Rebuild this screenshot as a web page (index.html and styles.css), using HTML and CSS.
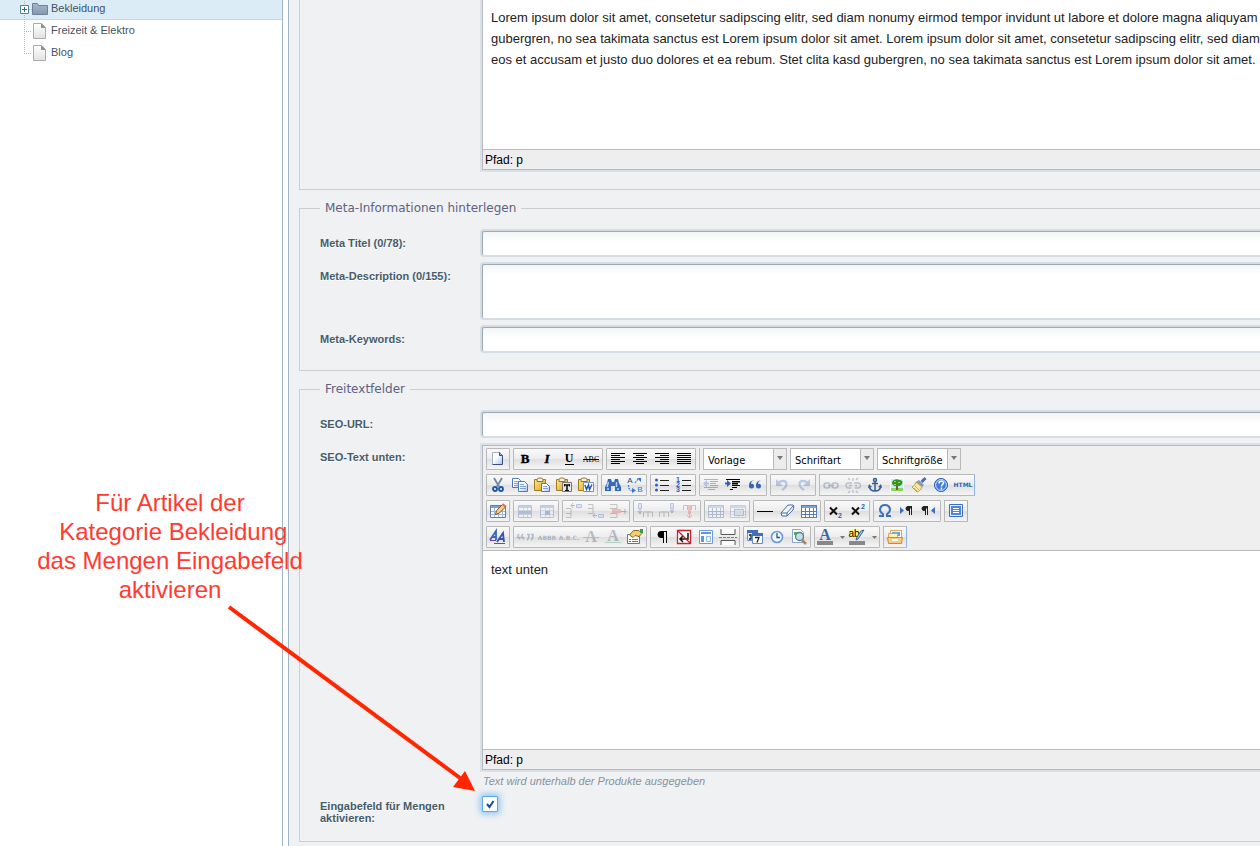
FILE: index.html
```html
<!DOCTYPE html>
<html lang="de">
<head>
<meta charset="utf-8">
<title>Kategorien</title>
<link rel="stylesheet" href="styles.css">
</head>
<body>
<svg width="0" height="0" class="defs" aria-hidden="true">
  <defs>
    <linearGradient id="paper" x1="0" y1="0" x2="1" y2="1"><stop offset=".4" stop-color="#fff"/><stop offset="1" stop-color="#a9c0e6"/></linearGradient>
    <linearGradient id="gold" x1="0" y1="0" x2="1" y2="1"><stop offset="0" stop-color="#ffe98a"/><stop offset="1" stop-color="#d9a02c"/></linearGradient>
    <linearGradient id="folder" x1="0" y1="0" x2="0" y2="1"><stop offset="0" stop-color="#a9b8cb"/><stop offset="1" stop-color="#8397b0"/></linearGradient>
    <linearGradient id="sheet" x1="0" y1="0" x2="0" y2="1"><stop offset="0" stop-color="#fff"/><stop offset="1" stop-color="#e2e2e2"/></linearGradient>
    <symbol id="grid" viewBox="0 0 20 20"><path d="M2.500 4.500h15v12h-15z" fill="#fff" stroke="#5f7fb4"/><path d="M3 5h14v2H3z" fill="#7ba0dc"/><path d="M6.500 7v9M10.500 7v9M14.500 7v9M3 10.500h14M3 13.500h14" stroke="#9db6dc"/></symbol>
    <symbol id="rows" viewBox="0 0 20 20"><path d="M3.500 4.500h13v12h-13z" fill="#fff" stroke="#3b63a8"/><path d="M4 5h12v2H4z" fill="#5b86c8"/><path d="M8.500 7v9M12.500 7v9M4 9.500h12M4 13.500h12" stroke="#7f9dcd"/></symbol>
    <symbol id="clip" viewBox="0 0 20 20"><path d="M2.500 4.500h11v11h-11z" fill="url(#gold)" stroke="#a57c1c"/><path d="M5 4.500c0-2 6-2 6 0v2H5z" fill="#f7f3d0" stroke="#8a733a"/></symbol>
  </defs>
</svg>
<div class="app">
  <nav class="tree" aria-label="Kategorien">
    <ul>
      <li class="selected"><svg width="51" height="22"><path d="M24.500 0v22M29 12.500h4" class="dots"/><path d="M20.500 8.500h8v8h-8z" fill="#fff" stroke="#4f8791"/><path d="M22 12.500h5M24.500 10v5" stroke="#2f6f7a"/><path d="M32.500 17.500v-11h5l1 2h9v9z" fill="url(#folder)" stroke="#6c819c"/></svg><a href="#">Bekleidung</a></li>
      <li><svg width="51" height="22"><path d="M24.500 0v22M26 12.500h6" class="dots"/><path d="M33.500 4.500h8l4 4v11h-12z" fill="url(#sheet)" stroke="#acacac"/><path d="M41 4v5h5z" fill="#929292"/></svg><a href="#">Freizeit &amp; Elektro</a></li>
      <li><svg width="51" height="22"><path d="M24.500 0v13M26 12.500h6" class="dots"/><path d="M33.500 4.500h8l4 4v11h-12z" fill="url(#sheet)" stroke="#acacac"/><path d="M41 4v5h5z" fill="#929292"/></svg><a href="#">Blog</a></li>
    </ul>
  </nav>
  <main class="panel">
    <form>
      <fieldset class="continued">
        <div class="row">
          <span class="label"></span>
          <div class="editor">
            <div class="content short"><p>Lorem ipsum dolor sit amet, consetetur sadipscing elitr, sed diam nonumy eirmod tempor invidunt ut labore et dolore magna aliquyam<br>gubergren, no sea takimata sanctus est Lorem ipsum dolor sit amet. Lorem ipsum dolor sit amet, consetetur sadipscing elitr, sed diam<br>eos et accusam et justo duo dolores et ea rebum. Stet clita kasd gubergren, no sea takimata sanctus est Lorem ipsum dolor sit amet.</p></div>
            <div class="status">Pfad: p</div>
          </div>
        </div>
      </fieldset>
      <fieldset>
        <legend>Meta-Informationen hinterlegen</legend>
        <div class="row"><label class="label" for="title">Meta Titel (0/78):</label><input class="field" id="title" type="text"></div>
        <div class="row"><label class="label" for="desc">Meta-Description (0/155):</label><textarea class="field area" id="desc"></textarea></div>
        <div class="row"><label class="label" for="keys">Meta-Keywords:</label><input class="field" id="keys" type="text"></div>
      </fieldset>
      <fieldset class="last">
        <legend>Freitextfelder</legend>
        <div class="row"><label class="label" for="url">SEO-URL:</label><input class="field" id="url" type="text"></div>
        <div class="row">
          <span class="label">SEO-Text unten:</span>
          <div class="stack">
          <div class="editor">
            <div class="toolbar">
              <div class="tools">
                <div class="group"><button type="button" aria-label="Neu"><svg viewBox="0 0 20 20"><path d="M4.500 3.500h7l3 3v9h-10z" fill="url(#paper)"/><path d="M4.500 15.500v-12h7" fill="none" stroke="#9fb2d2"/><path d="M11.500 3.500l3 3v9h-10" fill="none" stroke="#35507f"/><path d="M11.500 3.500v3h3" fill="#8fa8cf" stroke="#35507f"/></svg></button></div>
                <div class="group">
                  <button type="button" aria-label="Fett"><svg viewBox="0 0 20 20"><text x="10" y="14" class="serif heavy">B</text></svg></button>
                  <button type="button" aria-label="Kursiv"><svg viewBox="0 0 20 20"><text x="10" y="14" class="serif it heavy">I</text></svg></button>
                  <button type="button" aria-label="Unterstrichen"><svg viewBox="0 0 20 20"><text x="10" y="13" class="serif">U</text><path d="M6 15.500h9" stroke="#000"/></svg></button>
                  <button type="button" aria-label="Durchgestrichen"><svg viewBox="0 0 20 20"><text x="10" y="13" class="serif abc">ABC</text><path d="M2 10.500h16" stroke="#000"/></svg></button>
                </div>
                <div class="group lines">
                  <button type="button" aria-label="Links"><svg viewBox="0 0 20 20"><path d="M3 4.500h14M3 6.500h9M3 8.500h14M3 10.500h9M3 12.500h14M3 14.500h9"/></svg></button>
                  <button type="button" aria-label="Zentriert"><svg viewBox="0 0 20 20"><path d="M3 4.500h14M6 6.500h8M3 8.500h14M6 10.500h8M3 12.500h14M6 14.500h8"/></svg></button>
                  <button type="button" aria-label="Rechts"><svg viewBox="0 0 20 20"><path d="M3 4.500h14M8 6.500h9M3 8.500h14M8 10.500h9M3 12.500h14M8 14.500h9"/></svg></button>
                  <button type="button" aria-label="Blocksatz"><svg viewBox="0 0 20 20"><path d="M3 4.500h14M3 6.500h14M3 8.500h14M3 10.500h14M3 12.500h14M3 14.500h14"/></svg></button>
                </div>
                <span class="divider"></span>
                <div class="pick"><select aria-label="Vorlage"><option>Vorlage</option></select></div>
                <div class="pick"><select aria-label="Schriftart"><option>Schriftart</option></select></div>
                <div class="pick"><select aria-label="Schriftgröße"><option>Schriftgröße</option></select></div>
              </div>
              <div class="tools">
                <div class="group">
                  <button type="button" aria-label="Ausschneiden"><svg viewBox="0 0 20 20"><path d="M6 3l5 8.500M14 3L9 11.500" stroke="#6f87a8" stroke-width="1.800"/><g fill="none" stroke="#1f57a8" stroke-width="1.800"><circle cx="7" cy="14" r="2"/><circle cx="13" cy="14" r="2"/></g></svg></button>
                  <button type="button" aria-label="Kopieren"><svg viewBox="0 0 20 20"><g fill="url(#paper)" stroke="#4d78bd"><path d="M2.500 3.500h6l2 2v7h-8z"/><path d="M8.500 6.500h6l3 3v7h-9z"/></g><path d="M4 6.500h4M4 8.500h4M4 10.500h4M10 9.500h4M10 11.500h6M10 13.500h6" stroke="#7ea3dc"/></svg></button>
                  <button type="button" aria-label="Einfügen"><svg viewBox="0 0 20 20"><use href="#clip"/><path d="M9.500 8.500h5l3 3v5h-8z" fill="url(#paper)" stroke="#5c77a5"/><path d="M11 11.500h4M11 13.500h5" stroke="#7ea3dc"/></svg></button>
                  <button type="button" aria-label="Als Text einfügen"><svg viewBox="0 0 20 20"><use href="#clip"/><path d="M8.500 7.500h9v9h-9z" fill="#e8e8e0" stroke="#777"/><path d="M10 10h6M13 10v5" stroke="#111" stroke-width="1.600"/><path d="M11 15.500h4M10.500 9v2.500M15.500 9v2.500" stroke="#111"/></svg></button>
                  <button type="button" aria-label="Aus Word einfügen"><svg viewBox="0 0 20 20"><use href="#clip"/><path d="M7.500 7.500h10v9h-10z" fill="#fff" stroke="#6e93cf"/><path d="M9 10l1.500 4.500 2-4.500 1 4.500 2.500-5" fill="none" stroke="#2258b6" stroke-width="1.500"/></svg></button>
                </div>
                <div class="group">
                  <button type="button" aria-label="Suchen"><svg viewBox="0 0 20 20"><path d="M5 4h3l1 3h2l1-3h3l1 4 2 4v4h-6v-5H8v5H2v-4l2-4z" fill="#3569b7"/><path d="M5.500 7L4 12M13.500 7v5M4 14h2M14 14h2" stroke="#b6d2fa" stroke-width="1.500"/></svg></button>
                  <button type="button" aria-label="Ersetzen"><svg viewBox="0 0 20 20"><text x="5" y="8" class="tiny dark">A</text><text x="15" y="17" class="tiny">B</text><path d="M3.500 10v3l3 3M10 8l3-4" fill="none" stroke="#4d7fd0" stroke-width="1.200" stroke-dasharray="2 1"/><path d="M12 3h4v4zM7 13l4 2.500L7 18z" fill="#3671df"/></svg></button>
                </div>
                <div class="group">
                  <button type="button" aria-label="Liste"><svg viewBox="0 0 20 20"><path d="M8 5.500h9M8 10.500h9M8 15.500h9" stroke="#222"/><g fill="#2861bd"><circle cx="4.500" cy="5" r="1.500"/><circle cx="4.500" cy="10" r="1.500"/><circle cx="4.500" cy="15" r="1.500"/></g></svg></button>
                  <button type="button" aria-label="Nummerierung"><svg viewBox="0 0 20 20"><path d="M8 5.500h9M8 10.500h9M8 15.500h9" stroke="#222"/><text x="4" y="7" class="num">1</text><text x="4" y="12" class="num">2</text><text x="4" y="17" class="num">3</text></svg></button>
                </div>
                <div class="group">
                  <button type="button" class="off" aria-label="Ausrücken"><svg viewBox="0 0 20 20"><path d="M3 4.500h14M9 6.500h8M9 8.500h6M9 10.500h8M3 12.500h14M7 14.500h7" stroke="#222"/><path d="M2 8.500L6 5v2.500h2v2H6V12z" fill="#2861bd"/></svg></button>
                  <button type="button" aria-label="Einrücken"><svg viewBox="0 0 20 20"><path d="M3 4.500h14M9 6.500h8M9 8.500h5M9 10.500h8M9 12.500h5M7 14.500h3" stroke="#000"/><path d="M9 6h8v1.500H9zM9 8h6v1.500H9z"/><path d="M2 7.500h2V5l4 3.500L4 12V9.500H2z" fill="#2861bd"/></svg></button>
                  <button type="button" aria-label="Zitat"><svg viewBox="0 0 20 20"><path d="M9 5c-2 1-3 2-3 4 2-1 3 .5 3 2a2.500 2.500 0 0 1-5 0c0-3 1-5 5-6zM16 5c-2 1-3 2-3 4 2-1 3 .5 3 2a2.500 2.500 0 0 1-5 0c0-3 1-5 5-6z" fill="#3766aa"/></svg></button>
                </div>
                <div class="group">
                  <button type="button" class="off" aria-label="Rückgängig"><svg viewBox="0 0 20 20"><path d="M6 8c5-4 10-2 8 3-1 2-2 3-4 4" fill="none" stroke="#3766c8" stroke-width="2.200"/><path d="M4 4v7h7z" fill="#3766c8"/></svg></button>
                  <button type="button" class="off" aria-label="Wiederholen"><svg viewBox="0 0 20 20"><path d="M14 8c-5-4-10-2-8 3 1 2 2 3 4 4" fill="none" stroke="#3766c8" stroke-width="2.200"/><path d="M16 4v7H9z" fill="#3766c8"/></svg></button>
                </div>
                <div class="group end">
                  <button type="button" class="off" aria-label="Link"><svg viewBox="0 0 20 20"><g fill="none" stroke="#3c5482" stroke-width="1.500"><rect x="3" y="8" width="6" height="5" rx="2.500"/><rect x="11" y="8" width="6" height="5" rx="2.500"/><path d="M7 10.500h6"/></g></svg></button>
                  <button type="button" class="off" aria-label="Link entfernen"><svg viewBox="0 0 20 20"><g fill="none" stroke="#3c5482" stroke-width="1.300"><path d="M9 8H5.500a2.500 2.500 0 0 0 0 5H8M11 8h4a2.500 2.500 0 0 1 0 5h-3M6 10.500h3M12 10.500h2M5 3l2 2M10 3v3M15 3l-2 2M5 18l2-2M10 18v-3M15 18l-2-2"/></g></svg></button>
                  <button type="button" aria-label="Anker"><svg viewBox="0 0 20 20"><g fill="none" stroke="#365c94" stroke-width="1.500"><circle cx="10" cy="5" r="1.500"/><path d="M10 7v9M7 8.500h6M4.500 11c0 4 3 5 5.500 5s5.500-1 5.500-5"/></g><path d="M3 13l1-4 3 3zM17 13l-1-4-3 3z" fill="#365c94"/></svg></button>
                  <button type="button" aria-label="Bild"><svg viewBox="0 0 20 20"><path d="M3.500 3.500h13v13h-13z" fill="#c6eaff" stroke="#fff"/><path d="M4 13h12v3H4z" fill="#8bd75d"/><path d="M9 10h2v5H9z" fill="#8b5523"/><path d="M5 8c0-2 1-2 2-3 2-1 4-1 5 0 3 0 4 2 3 4-1 2-3 2-4 2-3 1-6-1-6-3z" fill="#2f9720"/><path d="M7 6.500h2M11 7.500h2M7 9.500h2" stroke="#93dc59"/></svg></button>
                  <button type="button" aria-label="Aufräumen"><svg viewBox="0 0 20 20"><path d="M16.500 3l-4 4" stroke="#4b6fae" stroke-width="3"/><path d="M10 5l5 5-2 2-6-5z" fill="#8a98b0"/><path d="M7 7l6 5c-1 3-3 4-5 5l-5-5c2-1 3-2 4-5z" fill="#f8eaa4" stroke="#b9a052"/><path d="M6 11l4 4M5 13l3 3" stroke="#cdb25e"/></svg></button>
                  <button type="button" aria-label="Hilfe"><svg viewBox="0 0 20 20"><circle cx="10" cy="10" r="6.500" fill="#3e7ddb" stroke="#2a5db0"/><circle cx="10" cy="10" r="5.400" fill="none" stroke="#cfe1fb"/><path d="M8 8.500c0-3 4.500-3 4.500-.5 0 1.500-2 1.500-2 3.500M10.500 12.500v2" fill="none" stroke="#fff" stroke-width="1.600"/></svg></button>
                  <button type="button" aria-label="HTML"><svg viewBox="0 0 20 20"><text x="10" y="12" class="html">HTML</text></svg></button>
                </div>
              </div>
              <div class="tools">
                <div class="group"><button type="button" aria-label="Tabelle"><svg viewBox="0 0 20 20"><use href="#grid"/><path d="M7.500 13.500l1-4 6-6 3 2.500-6 6z" fill="#f4cd80" stroke="#7b5930"/><path d="M14.500 3l3.500 3" stroke="#d4736a" stroke-width="2"/></svg></button></div>
                <div class="group off">
                  <button type="button" aria-label="Zeile"><svg viewBox="0 0 20 20"><use href="#rows"/><path d="M4 10h12v3H4z" fill="#3b70c4"/></svg></button>
                  <button type="button" aria-label="Zelle"><svg viewBox="0 0 20 20"><use href="#rows"/><path d="M8 10h5v4H8z" fill="#1e55b8"/></svg></button>
                </div>
                <div class="group off">
                  <button type="button" aria-label="Zeile davor"><svg viewBox="0 0 20 20"><path d="M2 7.500h5v9H2M2 12.500h5" fill="none" stroke="#555"/><path d="M7 4.500h4M9 2L7 4.500 9 7" stroke="#333" fill="none"/><path d="M12.500 3.500h5v3h-5z" fill="#a9c9ff" stroke="#2b60bc"/></svg></button>
                  <button type="button" aria-label="Zeile danach"><svg viewBox="0 0 20 20"><path d="M2 3.500h5v9H2M2 7.500h5" fill="none" stroke="#555"/><path d="M7 14.500h4M9 12l-2 2.500L9 17" stroke="#333" fill="none"/><path d="M12.500 13.500h5v3h-5z" fill="#a9c9ff" stroke="#2b60bc"/></svg></button>
                  <button type="button" aria-label="Zeile löschen"><svg viewBox="0 0 20 20"><path d="M2 3.500h7v13H2M2 7.500h7M2 12.500h7" fill="none" stroke="#555"/><path d="M4 8h9v4H4z" fill="#e0564e"/><path d="M13 10.500h5M16 8l2 2.500-2 2.500" stroke="#333" fill="none"/></svg></button>
                </div>
                <div class="group off">
                  <button type="button" aria-label="Spalte davor"><svg viewBox="0 0 20 20"><path d="M8.500 16v-5h9v5M13 11v5" fill="none" stroke="#555"/><path d="M3.500 2.500h3v5h-3z" fill="#a9c9ff" stroke="#2b60bc"/><path d="M5 8v5M3 10l2 3 2-3" stroke="#333" fill="none"/></svg></button>
                  <button type="button" aria-label="Spalte danach"><svg viewBox="0 0 20 20"><path d="M2.500 16v-5h9v5M7 11v5" fill="none" stroke="#555"/><path d="M13.500 2.500h3v5h-3z" fill="#a9c9ff" stroke="#2b60bc"/><path d="M15 8v4M13 9l2 3 2-3" stroke="#333" fill="none"/></svg></button>
                  <button type="button" aria-label="Spalte löschen"><svg viewBox="0 0 20 20"><path d="M4.500 9V4.500h12V9M8.500 4v5M12.500 4v5" fill="none" stroke="#555"/><path d="M9 4h3v9H9z" fill="#e0564e"/><path d="M10.500 12v5M8 14l2.500 3 2.500-3" stroke="#d33" fill="none"/></svg></button>
                </div>
                <div class="group off">
                  <button type="button" aria-label="Zellen teilen"><svg viewBox="0 0 20 20"><use href="#grid"/><path d="M2.500 4.500h15v12h-15zM6.500 7v9M10.500 7v9M14.500 7v9M3 10.500h14M3 13.500h14" fill="none" stroke="#35599c"/></svg></button>
                  <button type="button" aria-label="Zellen verbinden"><svg viewBox="0 0 20 20"><use href="#grid"/><path d="M6.500 8.500h9v6h-9z" fill="#b9cdea" stroke="#35599c"/></svg></button>
                </div>
                <div class="group">
                  <button type="button" aria-label="Linie"><svg viewBox="0 0 20 20"><path d="M2 10.500h16" stroke="#000"/></svg></button>
                  <button type="button" aria-label="Format löschen"><svg viewBox="0 0 20 20"><path d="M4 12l7-8h5l1 1-1 4-6 6H5z" fill="#f4f8ff" stroke="#486ba8"/><path d="M4 12h6l6-7M10 12v3" fill="none" stroke="#486ba8"/></svg></button>
                  <button type="button" aria-label="Hilfslinien"><svg viewBox="0 0 20 20"><use href="#grid"/><path d="M2.500 4.500h15v12h-15zM6.500 7v9M10.500 7v9M14.500 7v9M3 10.500h14M3 13.500h14" fill="none" stroke="#5a7db8"/></svg></button>
                </div>
                <div class="group">
                  <button type="button" aria-label="Tiefgestellt"><svg viewBox="0 0 20 20"><path d="M4 6.500l7 7M11 6.500l-7 7" stroke="#111" stroke-width="2"/><text x="14" y="17" class="num">2</text></svg></button>
                  <button type="button" aria-label="Hochgestellt"><svg viewBox="0 0 20 20"><path d="M4 6.500l7 7M11 6.500l-7 7" stroke="#111" stroke-width="2"/><text x="15" y="8" class="num">2</text></svg></button>
                </div>
                <div class="group">
                  <button type="button" aria-label="Sonderzeichen"><svg viewBox="0 0 20 20"><path d="M4 15h4v-2c-5-3-3-9 2-9s7 6 2 9v2h4" fill="none" stroke="#3970c2" stroke-width="2"/></svg></button>
                  <button type="button" aria-label="Links nach rechts"><svg viewBox="0 0 20 20"><path d="M3 6l4 3.500L3 13z" fill="#3970c2"/><path d="M15 5.500h-4a2 2 0 0 0 0 4h1M12.500 5v9M14.500 5v9" fill="#222" stroke="#222"/></svg></button>
                  <button type="button" aria-label="Rechts nach links"><svg viewBox="0 0 20 20"><path d="M16 6l-4 3.500 4 3.500z" fill="#3970c2"/><path d="M9 5.500H5a2 2 0 0 0 0 4h1M6.500 5v9M8.500 5v9" fill="#222" stroke="#222"/></svg></button>
                </div>
                <div class="group end"><button type="button" aria-label="Vollbild"><svg viewBox="0 0 20 20"><path d="M3.500 3.500h13v12h-13z" fill="#e3efff" stroke="#3a6fc4"/><path d="M5 5h10v9H5z" fill="#4f87e0"/><path d="M7 7.500h6M7 9.500h6M7 11.500h6" stroke="#fff"/></svg></button></div>
              </div>
              <div class="tools">
                <div class="group"><button type="button" aria-label="Stil"><svg viewBox="0 0 20 20"><path d="M2 13l6-9v9M4 10h4" fill="none" stroke="#3769b5" stroke-width="1.800"/><path d="M9 15l6-9 1 9M11 12h5" fill="none" stroke="#3553ae" stroke-width="1.800"/><path d="M2 13.500h6M6 16.500h11" stroke="#7a3fba"/></svg></button></div>
                <div class="group">
                  <button type="button" class="off" aria-label="Zitat"><svg viewBox="0 0 20 20"><path d="M4 7c-1 1-1.500 2-1.500 3.500h2v2M8 7c-1 1-1.500 2-1.500 3.500h2v2M12 7.500h2c0 2 0 4-2 5.500M16 7.500h2c0 2 0 4-2 5.500" fill="none" stroke="#2b4777" stroke-width="1.600"/></svg></button>
                  <button type="button" class="off" aria-label="Abkürzung"><svg viewBox="0 0 20 20"><text x="10" y="13" class="mini">ABBR</text></svg></button>
                  <button type="button" class="off" aria-label="Akronym"><svg viewBox="0 0 20 20"><text x="10" y="13" class="mini">A.B.C.</text></svg></button>
                  <button type="button" class="off" aria-label="Gelöscht"><svg viewBox="0 0 20 20"><text x="10" y="15" class="big">A</text><path d="M2 10.500h16" stroke="#e03030"/></svg></button>
                  <button type="button" class="off" aria-label="Eingefügt"><svg viewBox="0 0 20 20"><text x="10" y="14" class="big">A</text><path d="M2 15.500h16" stroke="#31a050"/></svg></button>
                  <button type="button" aria-label="Attribute"><svg viewBox="0 0 20 20"><path d="M2.500 7.500h12v9h-12z" fill="#fff" stroke="#60779d"/><path d="M4 12.500h2M7 12.500h6M4 14.500h2M7 14.500h6" stroke="#477ac9"/><path d="M4.500 8l4-4.500H14l3 3-3 3-4-1-2 2z" fill="#f6cf6a" stroke="#8d6427"/><path d="M15 2h3v4h-3z" fill="#3c9d50"/></svg></button>
                </div>
                <div class="group">
                  <button type="button" aria-label="Steuerzeichen"><svg viewBox="0 0 20 20"><path d="M15 4.500H9a3 3 0 0 0 0 6h2V5M11.500 5v11M14.500 5v11" fill="#000" stroke="#000"/><path d="M12 5h2v11h-2z" fill="#eee"/></svg></button>
                  <button type="button" aria-label="Geschütztes Leerzeichen"><svg viewBox="0 0 20 20"><path d="M3.500 3.500h13v13h-13z" fill="#fff" stroke="#c9202a" stroke-width="1.300"/><path d="M14 6v6H7M9 9l-3 3 3 3" stroke="#111" fill="none" stroke-width="1.500"/><path d="M4 4l12 12" stroke="#c9202a" stroke-width="1.300"/></svg></button>
                  <button type="button" aria-label="Vorlage einfügen"><svg viewBox="0 0 20 20"><path d="M3.500 3.500h13v13h-13z" fill="#fff" stroke="#6f9ad8"/><path d="M5 5h10v2H5zM5 9h3v6H5z" fill="#5d96e4"/><path d="M10.500 9.500h4v5h-4z" fill="#eef5ff" stroke="#93b9ec"/></svg></button>
                  <button type="button" aria-label="Seitenumbruch"><svg viewBox="0 0 20 20"><path d="M3 2v5.500h14V2M3 18v-4.500h14V18" fill="#fff" stroke="#555"/><path d="M1 10.500h18" stroke="#5b839b" stroke-dasharray="3 1"/></svg></button>
                </div>
                <div class="group">
                  <button type="button" aria-label="Datum"><svg viewBox="0 0 20 20"><path d="M2.500 3.500h10v10h-10z" fill="#e1ecff" stroke="#6a8ecb"/><path d="M2 3h11v3H2z" fill="#416fba"/><path d="M7.500 6.500h10v10h-10z" fill="#fff" stroke="#6a8ecb"/><path d="M7 6h11v3H7z" fill="#416fba"/><path d="M10 10.500h4l-2 5M4 8h2v4H4" fill="none" stroke="#222" stroke-width="1.300"/></svg></button>
                  <button type="button" aria-label="Uhrzeit"><svg viewBox="0 0 20 20"><circle cx="10" cy="10" r="5.500" fill="#f3f8ff" stroke="#6b98dd" stroke-width="1.600"/><path d="M10 6v4.500h3" fill="none" stroke="#285296" stroke-width="1.300"/></svg></button>
                  <button type="button" aria-label="Vorschau"><svg viewBox="0 0 20 20"><path d="M3.500 2.500h8l3 3v10h-11z" fill="#fff" stroke="#8ba6cf"/><path d="M5 5h4v3H5z" fill="#57ae5a"/><circle cx="10.500" cy="9.500" r="4" fill="#bfe2e9" stroke="#5e7a8c" stroke-width="1.300"/><path d="M13 13l4 4" stroke="#b58647" stroke-width="2.500"/></svg></button>
                </div>
                <div class="group wide">
                  <button type="button" aria-label="Textfarbe"><svg viewBox="0 0 32 20"><text x="10" y="13" class="big blue">A</text><path d="M2 14h16v4H2z" fill="#888"/><path d="M25 9h5l-2.500 3z" fill="#777"/></svg></button>
                  <button type="button" aria-label="Hintergrundfarbe"><svg viewBox="0 0 32 20"><path d="M2 3h10v8H2z" fill="#fff36b"/><text x="7" y="10" class="ab">ab</text><path d="M17 3l-6 9-2 1 1-3 4-6z" fill="#9fc7ec" stroke="#3d638e"/><path d="M2 14h16v4H2z" fill="#888"/><path d="M25 9h5l-2.500 3z" fill="#777"/></svg></button>
                </div>
                <div class="group end"><button type="button" aria-label="Medien"><svg viewBox="0 0 20 20"><path d="M5.500 3.500h11v7h-11z" fill="#fff" stroke="#d9a35f"/><path d="M7 5h8v4H7z" fill="#5fa4de"/><path d="M3.500 6.500h9v5h-9z" fill="#fff0b6" stroke="#d9a35f"/><path d="M2.500 10.500h15l-1 6h-13z" fill="#f8cb86" stroke="#cf8636"/><path d="M7 12h6v2H7z" fill="#fff"/></svg></button></div>
              </div>
            </div>
            <div class="content"><p>text unten</p></div>
            <div class="status">Pfad: p</div>
          </div>
          <p class="hint">Text wird unterhalb der Produkte ausgegeben</p>
          </div>
        </div>
        <div class="row check">
          <label class="label" for="qty">Eingabefeld für Mengen aktivieren:</label>
          <span class="box"><input type="checkbox" id="qty" checked><svg viewBox="0 0 16 16"><path d="M5 8l2.500 3L11.500 5" fill="none" stroke="#1c4f8c" stroke-width="2"/></svg></span>
        </div>
      </fieldset>
    </form>
  </main>
  <div class="note">Für Artikel der<br>&nbsp;Kategorie Bekleidung<br>das Mengen Eingabefeld<br>aktivieren</div>
  <svg class="arrow" viewBox="0 0 260 200"><path d="M9 7L240 178" stroke="#ff2600" stroke-width="4"/><path d="M255 191l-22-4 12-16z" fill="#ff2600"/></svg>
</div>
</body>
</html>
```
FILE: styles.css
```css
* { box-sizing: border-box; }
body { margin: 0; font-family: "Liberation Sans", Arial, sans-serif; font-size: 11px; background: #fff; overflow: hidden; }
.defs { position: absolute; }
.app { position: relative; display: flex; min-height: 100vh; overflow: hidden; }

.tree { flex: 0 0 283px; border-right: 1px solid #9fb5c3; }
.tree ul { list-style: none; margin: -3px 0 0; padding: 0; }
.tree li { display: flex; align-items: center; height: 22px; }
.tree .selected { background: #dcecf6; box-shadow: 0 1px #c5d8e4; }
.tree svg { flex: none; }
.tree a { color: #3f5363; text-decoration: none; }
.dots { fill: none; stroke: #b5b5b5; stroke-dasharray: 1 1; }

.panel { flex: 1; min-width: 0; margin-left: 5px; padding-left: 10px; border-left: 1px solid #9fb5c3; background: #f0f1f3; overflow: hidden; }
form { margin-right: -40px; }
fieldset { min-width: 0; margin: 11px 0 0; padding: 15px 20px 19px; border: 1px solid #ccced3; }
.continued { margin: 0; padding-top: 0; border-top: 0; }
.last { padding-bottom: 17px; }
legend { padding: 0 5px; font: 12px/15px "DejaVu Sans", Verdana, sans-serif; color: #5f6282; }
.row { display: flex; margin-bottom: 9px; }
.row:last-child { margin-bottom: 0; }
.label { flex: 0 0 162px; padding: 6px 20px 0 0; font-weight: bold; line-height: 12px; color: #475c6a; text-shadow: 0 1px #fff; }
.field { flex: 1; min-width: 0; height: 24px; margin: 0; padding: 2px 6px; border: 0 solid #9babb6; border-width: 1px 0 0 1px; border-radius: 2px; background: linear-gradient(#f3f5f5, #fff 10px); box-shadow: 0 0 0 2px #d5dce3; outline: 0; resize: none; font: inherit; }
.area { height: 54px; }

.stack { flex: 1; min-width: 0; }
.editor { flex: 1; min-width: 0; border: 1px solid #b4bac0; box-shadow: 0 0 0 2px #dae0e6; background: #fff; }
.content { height: 199px; padding: 8px; border-bottom: 1px solid #bbb; font-size: 13px; line-height: 21px; color: #222; white-space: nowrap; }
.short { height: 150px; padding-top: 7px; }
.continued .editor { border-top: 0; }
.content p { margin: 0; }
.status { height: 19px; padding: 0 2px; background: #eee; font-size: 12px; line-height: 21px; color: #000; }
.hint { margin: 5px 0 0; padding-left: 1px; line-height: 12px; font-style: italic; color: #84939f; }

.toolbar { display: flex; flex-direction: column; gap: 4px; padding: 2px 3px; border-bottom: 1px solid #bbb; background: #efefef; }
.tools { display: flex; gap: 3px; height: 22px; }
.group { display: flex; border: 1px solid #b9b9b9; border-radius: 1px; background: linear-gradient(#fafafa, #ededed 48%, #dedede 50%, #f5f5f5); }
.end { border-right-color: #8fb2e6; }
.group button { width: 22px; height: 20px; padding: 0 1px; border: 0; background: none; line-height: 0; }
.group button svg { width: 20px; height: 20px; }
.wide button { width: 32px; padding: 0; }
.wide button svg { width: 32px; }
.off svg { opacity: .3; }
.lines path { stroke: #000; }
.divider { width: 1px; background: #bbb; }
.pick { position: relative; width: 84px; height: 22px; }
.pick select { appearance: none; width: 100%; height: 22px; padding: 2px 0 0 4px; border: 1px solid #b9b9b9; border-radius: 0; background: linear-gradient(90deg, #fff 69px, #b9b9b9 69px, #b9b9b9 70px, #ececec 70px); font: 11px "DejaVu Sans Condensed", Tahoma, sans-serif; color: #000; }
.pick::after { content: ""; position: absolute; right: 4px; top: 8px; border: 3px solid transparent; border-top: 4px solid #777; border-bottom: 0; pointer-events: none; }

text { text-anchor: middle; font-family: "Liberation Sans", Arial, sans-serif; }
.serif { font: bold 12px "Liberation Serif", serif; }
.heavy { font-size: 13px; stroke: #000; stroke-width: .4px; }
.it { font-style: italic; }
.abc { font-size: 8px; font-weight: normal; }
.tiny { font-size: 8px; fill: #3671df; }
.dark { fill: #24457c; }
.num { font-size: 7px; font-weight: bold; fill: #2861bd; }
.html { font: bold 6px "DejaVu Sans", sans-serif; fill: #2f66b5; }
.mini { font: bold 6px "DejaVu Sans", sans-serif; fill: #2b4777; }
.big { font: bold 16px "Liberation Serif", serif; fill: #2b3f5f; }
.big.blue { fill: #3867a6; }
.ab { font-size: 10px; }

.check { align-items: flex-start; }
.check .label { padding-top: 4px; }
.box { position: relative; width: 16px; height: 16px; }
.box input { appearance: none; display: block; width: 16px; height: 16px; margin: 0; border: 1px solid #5ca8e8; border-radius: 1px; background: #fff; box-shadow: 0 0 6px 2px #8dc6f6; }
.box svg { position: absolute; inset: 0; pointer-events: none; }

.note { position: absolute; left: 20px; top: 488px; width: 300px; font-size: 24px; line-height: 29px; text-align: center; color: #ff3b30; }
.arrow { position: absolute; left: 220px; top: 600px; width: 260px; height: 200px; pointer-events: none; }
```
